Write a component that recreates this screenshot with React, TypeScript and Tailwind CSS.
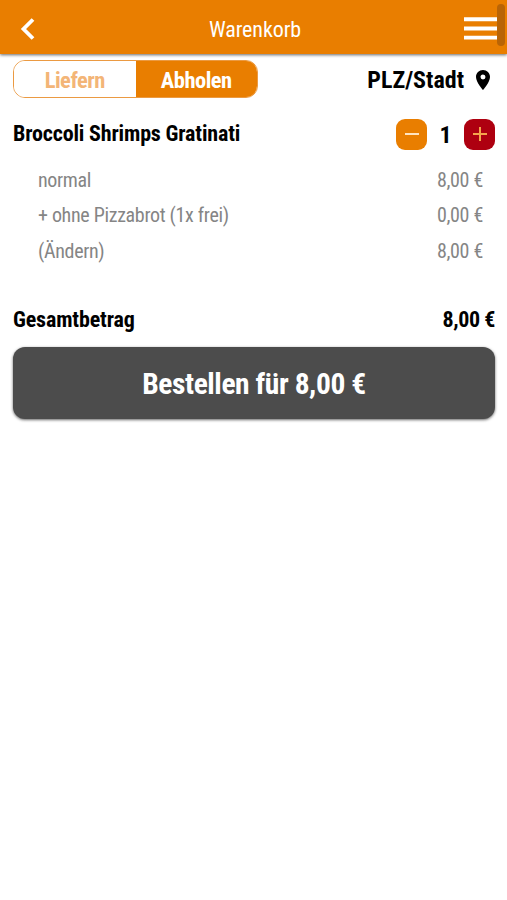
import React, { useState } from 'react';

type Extra = {
    label: string;
    price: number;
};

type OrderMode = 'deliver' | 'pickup';

const extras: Extra[] = [
    { label: 'normal', price: 8 },
    { label: '+ ohne Pizzabrot (1x frei)', price: 0 },
    { label: '(Ändern)', price: 8 },
];

const formatPrice = (value: number) => `${value.toFixed(2).replace('.', ',')} €`;

const Header: React.FC = () => (
    <header className="relative h-[54px] flex items-center justify-between bg-[#e97e00] pt-[3px] pl-5 pr-[10px] text-white shadow-[0_1px_3px_rgba(0,0,0,0.6)]">
        <button type="button" aria-label="Zurück" className="w-[26px]">
            <svg className="w-[15px] h-[22px]" viewBox="0 0 15 22" fill="none" stroke="currentColor" strokeWidth="3.8">
                <path d="M13 1.5L3.5 11L13 20.5" />
            </svg>
        </button>
        <h1 className="pt-[2px] text-[22px] leading-none tracking-[-0.1px]">Warenkorb</h1>
        <button type="button" aria-label="Menü" className="w-[33px]">
            <svg className="w-[33px] h-[23px]" viewBox="0 0 33 23" fill="currentColor">
                <path d="M0 0.3h33v3.9H0zM0 9.5h33v3.9H0zM0 18.7h33v3.9H0z" />
            </svg>
        </button>
        <div className="absolute right-[2px] top-1 w-2 h-[42px] rounded-sm bg-[#b96406]" />
    </header>
);

const App: React.FC = () => {
    const [mode, setMode] = useState<OrderMode>('pickup');
    const [amount, setAmount] = useState(1);
    const total = formatPrice(amount * 8);

    const modeClass = (value: OrderMode) =>
        mode === value ? 'bg-[#e97e00] text-white' : 'bg-white text-[#f3b577]';

    return (
        <div className="min-h-screen bg-white text-black font-['Roboto_Condensed',Roboto,sans-serif] [font-stretch:75%]">
            <Header />
            <main className="pl-[13px] pr-3">
                <div className="flex items-center justify-between pt-[6px]">
                    <div className="flex w-[245px] h-[38px] rounded-[12px] border border-[#eb9a42] overflow-hidden text-[22.5px] font-bold tracking-[-0.5px]">
                        <button type="button" onClick={() => setMode('deliver')} className={`flex-1 pt-[3px] ${modeClass('deliver')}`}>
                            Liefern
                        </button>
                        <button type="button" onClick={() => setMode('pickup')} className={`flex-1 pt-[3px] ${modeClass('pickup')}`}>
                            Abholen
                        </button>
                    </div>
                    <button type="button" className="flex items-center gap-3 pt-[2px] pr-[5px] text-[24px] leading-none font-bold">
                        <span>PLZ/Stadt</span>
                        <svg className="w-[14px] h-5" viewBox="5 2 14 20" fill="currentColor">
                            <path d="M12 2C8.13 2 5 5.13 5 9c0 5.25 7 13 7 13s7-7.75 7-13c0-3.87-3.13-7-7-7zm0 9.5a2.5 2.5 0 0 1 0-5 2.5 2.5 0 0 1 0 5z" />
                        </svg>
                    </button>
                </div>

                <div className="flex items-center justify-between mt-5">
                    <h2 className="text-[22px] leading-[32px] font-bold tracking-[-0.16px]">Broccoli Shrimps Gratinati</h2>
                    <div className="flex items-center">
                        <button
                            type="button"
                            aria-label="Weniger"
                            onClick={() => setAmount(Math.max(1, amount - 1))}
                            className="flex items-center justify-center w-[31px] h-[31px] rounded-[9px] bg-[#e97e00]"
                        >
                            <svg className="w-[14px] h-[14px]" viewBox="0 0 14 14" stroke="#ffe3c0" strokeWidth="2">
                                <path d="M0 7h14" />
                            </svg>
                        </button>
                        <span className="w-[37px] pt-[2px] text-center text-[24px] leading-none font-bold">{amount}</span>
                        <button
                            type="button"
                            aria-label="Mehr"
                            onClick={() => setAmount(amount + 1)}
                            className="flex items-center justify-center w-[31px] h-[31px] rounded-[9px] bg-[#ae0010]"
                        >
                            <svg className="w-[14px] h-[14px]" viewBox="0 0 14 14" stroke="#f5a44c" strokeWidth="2">
                                <path d="M0 7h14M7 0v14" />
                            </svg>
                        </button>
                    </div>
                </div>

                <ul className="mt-[13px] pl-[25px] pr-3 text-[20px] leading-[35.3px] tracking-[-0.32px] text-[#858585]">
                    {extras.map((extra) => (
                        <li key={extra.label} className="flex justify-between">
                            <span>{extra.label}</span>
                            <span>{formatPrice(extra.price)}</span>
                        </li>
                    ))}
                </ul>

                <div className="flex justify-between mt-[35px] text-[22px] leading-[32px] font-bold">
                    <span className="tracking-[-0.15px]">Gesamtbetrag</span>
                    <span className="tracking-[-0.4px]">{total}</span>
                </div>

                <button
                    type="button"
                    className="mt-[11px] w-full h-[72px] pt-[2px] rounded-[12px] bg-[#4c4c4c] text-white text-[29.5px] font-bold tracking-[-0.42px] shadow-[0_1px_3px_rgba(0,0,0,0.6)]"
                >
                    Bestellen für {total}
                </button>
            </main>
        </div>
    );
};

export default App;
